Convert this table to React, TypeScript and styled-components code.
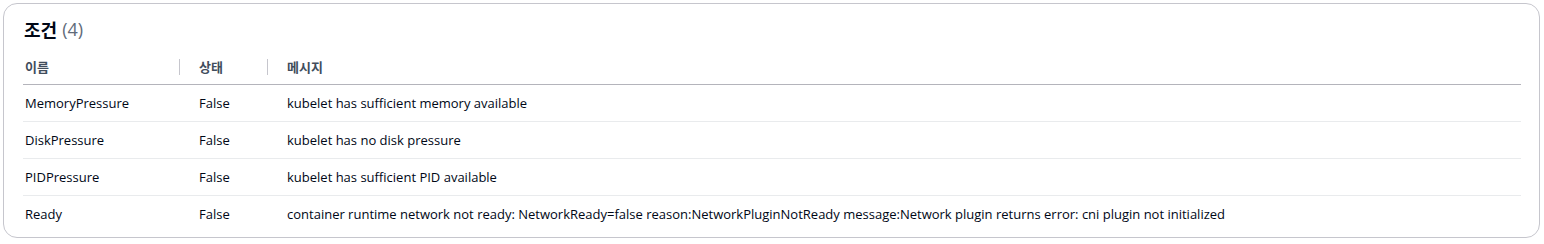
import React from "react";
import styled, { createGlobalStyle } from "styled-components";

const Global = createGlobalStyle`
  html, body { margin: 0; padding: 0; background: #ffffff; }
  body {
    font-family: "Open Sans", "Noto Sans CJK KR", sans-serif;
    color: #000716;
    -webkit-font-smoothing: antialiased;
  }
`;

const Page = styled.div`
  padding: 3px 4px 6px 3px;
`;

const Card = styled.section`
  border: 1px solid #c6c6cd;
  border-radius: 14px;
  padding: 0 18px 0 19px;
  height: 235px;
  box-sizing: border-box;
`;

const Header = styled.h2`
  margin: 0;
  height: 51px;
  display: flex;
  align-items: center;
  gap: 5px;
  padding-left: 1px;
  padding-bottom: 2px;
  box-sizing: border-box;
  font-size: 18px;
  font-weight: 700;
  color: #000716;
`;

const Count = styled.span`
  font-weight: 400;
  color: #5f6b7a;
`;

const Table = styled.div`
  display: grid;
  grid-template-columns: 156px 88px 1fr;
`;

const HeadCell = styled.div<{ $sep?: boolean; $first?: boolean }>`
  position: relative;
  height: 30px;
  box-sizing: border-box;
  display: flex;
  align-items: center;
  padding-left: ${(p) => (p.$first ? "2px" : "20px")};
  padding-bottom: 7px;
  font-size: 13px;
  font-weight: 700;
  color: #414d5c;
  border-bottom: 1px solid #b4b4bb;
  ${(p) =>
    p.$sep &&
    `&::before {
      content: "";
      position: absolute;
      left: 0;
      top: 4px;
      height: 16px;
      border-left: 1px solid #c6c6cd;
    }`}
`;

const Cell = styled.div<{ $first?: boolean; $last?: boolean }>`
  height: 36px;
  display: flex;
  align-items: center;
  padding-left: ${(p) => (p.$first ? "2px" : "20px")};
  font-size: 13px;
  color: #000716;
  white-space: nowrap;
  border-bottom: ${(p) => (p.$last ? "none" : "1px solid #e9ebed")};
`;

const rows = [
  ["MemoryPressure", "False", "kubelet has sufficient memory available"],
  ["DiskPressure", "False", "kubelet has no disk pressure"],
  ["PIDPressure", "False", "kubelet has sufficient PID available"],
  [
    "Ready",
    "False",
    "container runtime network not ready: NetworkReady=false reason:NetworkPluginNotReady message:Network plugin returns error: cni plugin not initialized",
  ],
];

export default function App() {
  return (
    <Page>
      <Global />
      <Card>
        <Header>
          조건 <Count>(4)</Count>
        </Header>
        <Table>
          <HeadCell $first>이름</HeadCell>
          <HeadCell $sep>상태</HeadCell>
          <HeadCell $sep>메시지</HeadCell>
          {rows.map((r, i) => (
            <React.Fragment key={r[0]}>
              <Cell $first $last={i === rows.length - 1}>{r[0]}</Cell>
              <Cell $last={i === rows.length - 1}>{r[1]}</Cell>
              <Cell $last={i === rows.length - 1}>{r[2]}</Cell>
            </React.Fragment>
          ))}
        </Table>
      </Card>
    </Page>
  );
}
